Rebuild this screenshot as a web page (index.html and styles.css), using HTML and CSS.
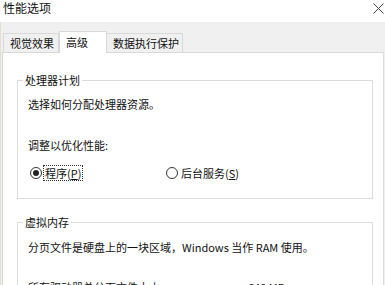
FILE: index.html
```html
<!DOCTYPE html>
<html lang="zh-CN">
<head>
    <meta charset="UTF-8">
    <meta name="viewport" content="width=device-width, initial-scale=1.0">
    <title>性能选项</title>
    <link rel="stylesheet" href="styles.css">
</head>
<body>
    <div class="titlebar">
        <span class="title">性能选项</span>
        <svg class="close" width="11" height="11" viewBox="0 0 11 11">
            <path d="M0.5 0.5L10.5 10.5M10.5 0.5L0.5 10.5" stroke="#444" stroke-width="1"/>
        </svg>
    </div>
    <div class="dialog">
        <div class="tabs">
            <div class="tab first">视觉效果</div>
            <div class="tab active">高级</div>
            <div class="tab wide">数据执行保护</div>
        </div>
        <div class="panel">
            <fieldset class="group">
                <legend>处理器计划</legend>
                <p class="line first">选择如何分配处理器资源。</p>
                <p class="line gap">调整以优化性能:</p>
                <div class="radios">
                    <label class="radio main"><span class="dot checked"></span><span class="caption focus">程序(<u>P</u>)</span></label>
                    <label class="radio"><span class="dot"></span><span class="caption">后台服务(<u>S</u>)</span></label>
                </div>
            </fieldset>
            <fieldset class="group second">
                <legend>虚拟内存</legend>
                <p class="line first">分页文件是硬盘上的一块区域，Windows 当作 RAM 使用。</p>
                <div class="size-row">
                    <span class="size-label">所有驱动器总分页文件大小:</span>
                    <span>640 MB</span>
                </div>
            </fieldset>
        </div>
    </div>
</body>
</html>
```

FILE: styles.css
```css
body {
    margin: 0;
    font-family: "Noto Sans CJK SC", "Noto Sans", sans-serif;
    font-size: 11px;
    line-height: 14px;
    color: #111;
    background-color: #f0f0f0;
    overflow: hidden;
}

.titlebar {
    height: 22px;
    box-sizing: border-box;
    padding: 1px 1px 0 3px;
    background-color: #fff;
    display: flex;
    justify-content: space-between;
    align-items: flex-start;
}

.title {
    font-size: 12px;
    line-height: 14px;
}

.close {
    margin-top: 2px;
}

.dialog {
    padding: 9px 1px 0 2px;
    box-shadow: inset 1px 0 0 #e6ddd2;
}

.tabs {
    height: 21px;
    display: flex;
    align-items: flex-end;
    padding-left: 1px;
}

.tab {
    height: 19px;
    box-sizing: border-box;
    padding: 0 0 0 6px;
    line-height: 18px;
    white-space: nowrap;
    border: 1px solid #d9d9d9;
    border-bottom: none;
    background-color: #f0f0f0;
    width: 56px;
}

    .tab.active {
        height: 22px;
        margin-bottom: -1px;
        padding-left: 7px;
        line-height: 21px;
        width: 48px;
        background-color: #fff;
        position: relative;
        z-index: 1;
        border-left: none;
        border-right: none;
        box-shadow: inset 1px 0 0 #d9d9d9, inset -1px 0 0 #d9d9d9;
    }

    .tab.wide {
        width: 76px;
        border-left: none;
    }

.panel {
    background-color: #fff;
    border: 1px solid #d9d9d9;
    padding: 21px 10px 0 14px;
    height: 300px;
}

.group {
    margin: 0;
    border: 1px solid #dcdcdc;
    padding: 0 8px 17px 10px;
}

    .group.second {
        margin-top: 17px;
    }

legend {
    margin-left: -5px;
    padding: 0 2px;
    line-height: 12px;
}

.line {
    margin: 0;
}

    .line.first {
        margin-top: 11px;
    }

    .line.gap {
        margin-top: 27px;
    }

.second .line.first {
    margin-top: 12px;
}

.radios {
    margin-top: 13px;
    display: flex;
    height: 16px;
}

.radio {
    display: flex;
    align-items: center;
}

    .radio.main {
        width: 136px;
        margin-left: 2px;
    }

.dot {
    width: 12px;
    height: 12px;
    box-sizing: border-box;
    border: 1px solid #333;
    border-radius: 50%;
    display: flex;
    align-items: center;
    justify-content: center;
}

    .dot.checked::after {
        content: "";
        width: 6px;
        height: 6px;
        border-radius: 50%;
        background-color: #222;
    }

.caption {
    margin-left: 1px;
    padding: 0 1px;
    border: 1px solid transparent;
}

    .caption.focus {
        border: 1px dotted #333;
    }

u {
    text-decoration-thickness: 1px;
    text-underline-offset: 1px;
}

.size-row {
    margin-top: 26px;
    display: flex;
}

.size-label {
    width: 220px;
}
```
